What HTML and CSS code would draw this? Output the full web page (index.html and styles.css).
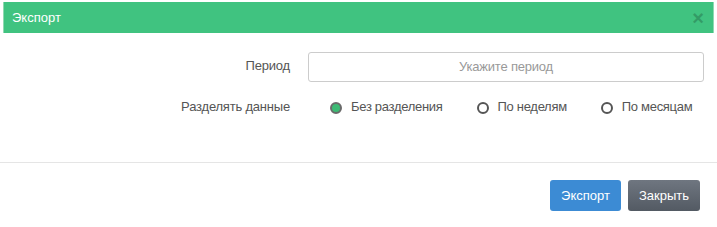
FILE: index.html
```html
<!DOCTYPE html>
<html lang="ru">
<head>
<meta charset="utf-8">
<title>Экспорт</title>
<link rel="stylesheet" href="styles.css">
</head>
<body>
<div class="modal">
  <div class="modal-header">
    <span class="modal-title">Экспорт</span>
    <span class="close">×</span>
  </div>
  <div class="modal-body">
    <div class="form-row">
      <label class="control-label">Период</label>
      <div class="control"><div class="input">Укажите период</div></div>
    </div>
    <div class="form-row radios-row">
      <label class="control-label">Разделять данные</label>
      <div class="radios">
        <label class="radio"><span class="dot checked"></span>Без разделения</label>
        <label class="radio"><span class="dot"></span>По неделям</label>
        <label class="radio"><span class="dot"></span>По месяцам</label>
      </div>
    </div>
  </div>
  <div class="modal-footer">
    <button class="btn btn-primary">Экспорт</button>
    <button class="btn btn-default">Закрыть</button>
  </div>
</div>
</body>
</html>
```

FILE: styles.css
```css
html, body {
  margin: 0;
  padding: 0;
  background: #fff;
}
body {
  font-family: "Liberation Sans", Arial, sans-serif;
  font-size: 13px;
  color: #555;
}
.modal {
  width: 717px;
  height: 227px;
  box-sizing: border-box;
}
.modal-header {
  margin: 2px 3px 0 3px;
  height: 31px;
  box-sizing: border-box;
  background: #40c380;
  border-left: 1px solid #8fd9b2;
  border-right: 1px solid #8fd9b2;
  display: flex;
  align-items: center;
  justify-content: space-between;
  padding: 0 9px 0 8px;
  color: #fff;
}
.modal-title {
  font-size: 13px;
  line-height: 18px;
}
.close {
  font-size: 20px;
  font-weight: bold;
  line-height: 20px;
  color: #000;
  opacity: 0.2;
  margin-top: 1px;
}
.modal-body {
  padding: 19px 14px 0 0;
  height: 130px;
  box-sizing: border-box;
  border-bottom: 1px solid #e5e5e5;
}
.form-row {
  display: grid;
  grid-template-columns: 290px 1fr;
  column-gap: 18px;
  margin-bottom: 15px;
}
.control-label {
  text-align: right;
  padding-top: 5px;
  line-height: 18px;
  color: #555;
  letter-spacing: -0.2px;
}
.input {
  height: 30px;
  box-sizing: border-box;
  border: 1px solid #ccc;
  border-radius: 3px;
  text-align: center;
  line-height: 28px;
  color: #999;
  width: 396px;
  letter-spacing: -0.2px;
}
.radios-row .control-label {
  padding-top: 1px;
}
.radios {
  display: flex;
  align-items: center;
  gap: 34px;
  padding-left: 22px;
  height: 20px;
}
.radio {
  display: flex;
  align-items: center;
  gap: 9px;
  color: #555;
  line-height: 20px;
  letter-spacing: -0.3px;
}
.dot {
  width: 12px;
  height: 12px;
  box-sizing: border-box;
  border: 2px solid #555;
  border-radius: 50%;
  background: #fff;
  margin-top: 2px;
}
.dot.checked {
  background: #3dba74;
  border-color: #6a6a6a;
}
.modal-footer {
  display: flex;
  justify-content: flex-end;
  gap: 7px;
  padding: 17px 17px 0 0;
}
.btn {
  font-family: "Liberation Sans", Arial, sans-serif;
  font-size: 13px;
  line-height: 19px;
  padding: 6px 11px;
  border: 0;
  border-radius: 3px;
  color: #fff;
}
.btn-primary {
  background: #3c8bd4;
}
.btn-default {
  background: linear-gradient(#6f7680, #535a63);
}
```
